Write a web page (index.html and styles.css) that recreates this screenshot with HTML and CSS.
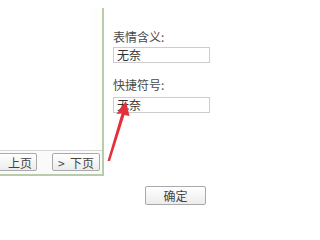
FILE: index.html
```html
<!DOCTYPE html>
<html>
<head>
<meta charset="utf-8">
<link rel="stylesheet" href="styles.css">
</head>
<body>
<div class="page">
  <div class="left">
    <div class="list"></div>
    <div class="toolbar">
      <button class="btn prev">上页</button>
      <button class="btn next">&gt;&nbsp; 下页</button>
    </div>
  </div>
  <div class="right">
    <div class="label first">表情含义:</div>
    <div class="field">无奈</div>
    <div class="label second">快捷符号:</div>
    <div class="field">无奈</div>
    <div class="actions">
      <button class="btn ok">确定</button>
    </div>
  </div>
  <svg class="arrow" width="212" height="210" viewBox="0 0 212 210">
    <polygon points="126,101 116.5,114 121.5,113.5 107.5,161 110,161 124.5,115 129.5,116" fill="#e5303a"/>
  </svg>
</div>
</body>
</html>
```

FILE: styles.css
```css
* { box-sizing: border-box; }
html, body { margin: 0; padding: 0; background: #fff; }
body {
  width: 212px;
  height: 210px;
  overflow: hidden;
  font-family: "Noto Sans CJK SC", "Noto Sans", sans-serif;
  font-size: 12px;
  color: #444;
}
.page {
  position: relative;
  display: flex;
  width: 212px;
  height: 210px;
}
.left {
  width: 104px;
  margin-top: 8px;
  height: 168px;
  display: flex;
  flex-direction: column;
  border-right: 2px solid #b8ccac;
  border-bottom: 2px solid #b8ccac;
  background: linear-gradient(to right, #fff 85%, #fcfcf8 100%);
}
.list { flex: 1; }
.toolbar {
  height: 24px;
  border-top: 1px solid #d6d6d6;
  display: flex;
  align-items: flex-start;
  padding-top: 2px;
  gap: 15px;
  background: #fafafa;
}
.btn {
  font-family: "Noto Sans CJK SC", "Noto Sans", sans-serif;
  font-size: 12px;
  line-height: 15px;
  color: #444;
  height: 18px;
  padding: 0;
  border: 1px solid #a9a9a9;
  border-radius: 2px;
  background: linear-gradient(#ffffff, #ececec);
}
.prev { width: 40px; margin-left: -3px; padding-left: 6px; }
.next { width: 48px; }
.right {
  flex: 1;
  padding: 30px 2px 0 9px;
  display: flex;
  flex-direction: column;
}
.label {
  line-height: 14px;
  height: 14px;
  color: #4a4a4a;
}
.first { margin-bottom: 3px; }
.second { margin-top: 15px; margin-bottom: 5px; }
.field {
  height: 16px;
  line-height: 14px;
  border: 1px solid #cdcdcd;
  padding-left: 3px;
  color: #333;
  background: #fff;
}
.actions {
  display: flex;
  justify-content: flex-end;
  margin-top: 73px;
  padding-right: 4px;
}
.ok { width: 61px; height: 19px; }
.arrow {
  position: absolute;
  left: 0;
  top: 0;
  pointer-events: none;
}
```
